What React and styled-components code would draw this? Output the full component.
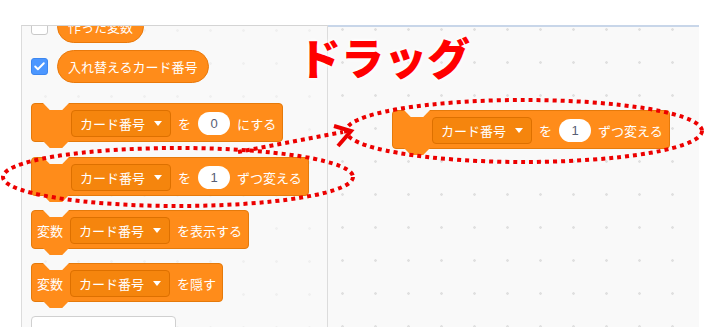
import styled, { createGlobalStyle } from "styled-components"
import { Check } from "lucide-react"

const GlobalStyle = createGlobalStyle`
  *, *::before, *::after { box-sizing: border-box; }
  html, body { margin: 0; padding: 0; background: #fff; }
  body { font-family: "Noto Sans CJK JP", "Noto Sans", sans-serif; }
`

const ORANGE = "#ff8c1a"
const BG = "#f9f9f9"

function VarBlock({ label, after, num, indent, mt, bg }) {
    return (
        <Block $indent={indent} $mt={mt} $bg={bg}>
            {label && <Label>{label}</Label>}
            <Dropdown>
                <Label>カード番号</Label>
                <Caret />
            </Dropdown>
            {num !== undefined && <Label>を</Label>}
            {num !== undefined && <NumberPill>{num}</NumberPill>}
            <Label>{after}</Label>
        </Block>
    )
}

export default function App() {
    return (
        <Page>
            <GlobalStyle />
            <TopBand />
            <Workspace>
                <Palette>
                    <VarRow $mt={-16}>
                        <Checkbox />
                        <Reporter>作った変数</Reporter>
                    </VarRow>
                    <VarRow $mt={7}>
                        <Checkbox $checked>
                            <Check size={13} color="#fff" strokeWidth={3.5} />
                        </Checkbox>
                        <Reporter>入れ替えるカード番号</Reporter>
                    </VarRow>
                    <VarBlock indent={39} mt={20} num="0" after="にする" bg={BG} />
                    <VarBlock indent={39} mt={15} num="1" after="ずつ変える" bg={BG} />
                    <VarBlock indent={5} mt={14} label="変数" after="を表示する" bg={BG} />
                    <VarBlock indent={5} mt={14} label="変数" after="を隠す" bg={BG} />
                    <MakeButton />
                </Palette>
                <Canvas>
                    <Floating $x={64} $y={83}>
                        <VarBlock indent={39} mt={0} num="1" after="ずつ変える" bg={BG} />
                    </Floating>
                </Canvas>
            </Workspace>

            <Caption>ドラッグ</Caption>

            <Overlay width="705" height="327" viewBox="0 0 705 327">
                <g fill="none" stroke="#ec0000" strokeWidth="4" strokeDasharray="4 4">
                    <ellipse cx="178" cy="177" rx="175" ry="29" />
                    <ellipse cx="524" cy="131" rx="178" ry="31" />
                    <line x1="238" y1="152" x2="343" y2="132" />
                </g>
                <path d="M334 126 L351 131 L338 146" fill="none" stroke="#ec0000" strokeWidth="4" strokeLinejoin="miter" />
            </Overlay>
        </Page>
    )
}

const Page = styled.div`
    position: relative;
    width: 705px;
    height: 327px;
    overflow: hidden;
    background: #fff;
    display: flex;
    flex-direction: column;
`
const TopBand = styled.div`
    height: 25px;
    flex: none;
`
const Workspace = styled.div`
    flex: 1;
    display: flex;
    padding: 0 6px 0 21px;
    min-height: 0;
`
const Palette = styled.div`
    width: 307px;
    flex: none;
    display: flex;
    flex-direction: column;
    align-items: flex-start;
    padding-left: 9px;
    overflow: hidden;
    background-color: ${BG};
    background-image: radial-gradient(circle, #f0f0f0 1px, transparent 1.6px);
    background-size: 33px 33px;
    background-position: 7px -12px;
    border-left: 1px solid #dcdcdc;
    border-right: 1px solid #dcdcdc;
    border-top: 1px solid #d4d4d4;
`
const Canvas = styled.div`
    flex: 1;
    position: relative;
    background-color: ${BG};
    background-image: radial-gradient(circle, #e0e0e0 1px, transparent 1.6px);
    background-size: 33px 33px;
    background-position: -2px -14px;
    border-top: 2px solid #c8d6e9;
`
const Floating = styled.div`
    position: absolute;
    left: ${p => p.$x}px;
    top: ${p => p.$y}px;
`
const VarRow = styled.div`
    display: flex;
    align-items: center;
    gap: 9px;
    margin-top: ${p => p.$mt}px;
    flex: none;
`
const Checkbox = styled.div`
    width: 17px;
    height: 17px;
    border-radius: 3px;
    display: flex;
    align-items: center;
    justify-content: center;
    background: ${p => (p.$checked ? "#4c97ff" : "#fff")};
    border: 1px solid ${p => (p.$checked ? "#3d87f0" : "#c9c9c9")};
`
const Reporter = styled.div`
    height: 33px;
    padding: 0 10px;
    border-radius: 17px;
    display: flex;
    align-items: center;
    background: ${ORANGE};
    border: 1px solid #e9790b;
    color: #fff;
    font-size: 13px;
    white-space: nowrap;
`
const Block = styled.div`
    position: relative;
    flex: none;
    height: 39px;
    display: inline-flex;
    align-items: center;
    gap: 7px;
    padding: 1px 6px 0 ${p => p.$indent}px;
    margin-top: ${p => p.$mt}px;
    background: ${ORANGE};
    border: 1px solid #e57a0b;
    border-radius: 4px;
    color: #fff;
    font-size: 13px;
    white-space: nowrap;

    &::before {
        content: "";
        position: absolute;
        top: -1px;
        left: 11px;
        width: 26px;
        height: 7px;
        background: ${p => p.$bg};
        clip-path: polygon(0 0, 100% 0, 74% 100%, 26% 100%);
    }
    &::after {
        content: "";
        position: absolute;
        bottom: -7px;
        left: 11px;
        width: 26px;
        height: 7px;
        background: ${ORANGE};
        clip-path: polygon(0 0, 100% 0, 74% 100%, 26% 100%);
    }
`
const Label = styled.span`
    line-height: 1;
`
const Dropdown = styled.div`
    height: 27px;
    display: flex;
    align-items: center;
    gap: 9px;
    padding: 0 8px;
    border-radius: 4px;
    background: #f5850d;
    border: 1px solid #dd7000;
`
const Caret = styled.span`
    width: 0;
    height: 0;
    border-left: 4px solid transparent;
    border-right: 4px solid transparent;
    border-top: 5px solid #fff;
`
const NumberPill = styled.div`
    width: 32px;
    height: 23px;
    border-radius: 12px;
    display: flex;
    align-items: center;
    justify-content: center;
    background: #fff;
    color: #575e75;
    font-family: "Liberation Sans", Arial, sans-serif;
    font-size: 13px;
`
const MakeButton = styled.div`
    flex: none;
    width: 145px;
    height: 30px;
    margin-top: 14px;
    background: #fff;
    border: 1px solid #d0d0d0;
    border-radius: 4px;
`
const Caption = styled.div`
    position: absolute;
    left: 298px;
    top: 35px;
    font-size: 43px;
    font-weight: 900;
    line-height: 1;
    color: #ff0000;
    text-shadow: 0 0 2px #fff, 0 0 4px #fff, 0 0 6px #fff;
    white-space: nowrap;
`
const Overlay = styled.svg`
    position: absolute;
    left: 0;
    top: 0;
    pointer-events: none;
`
